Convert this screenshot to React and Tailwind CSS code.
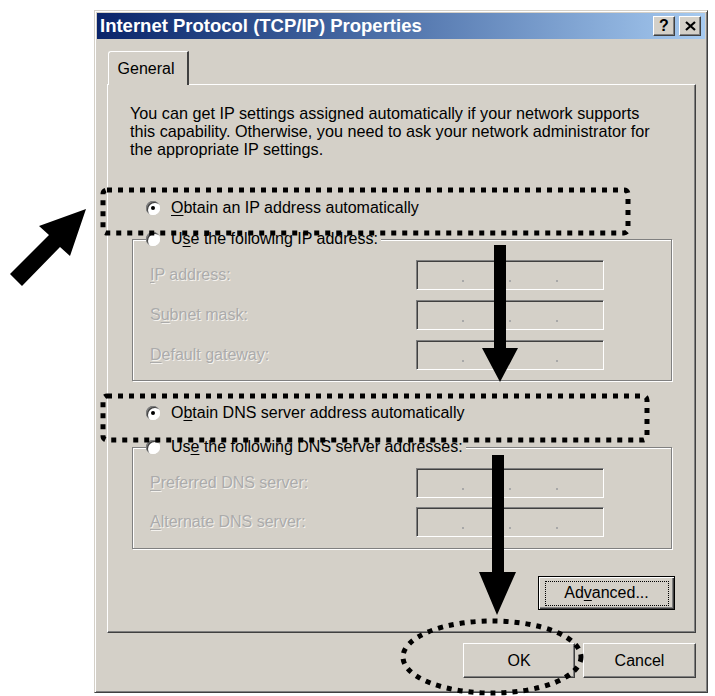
const Radio = ({ checked }) => (
  <span className="relative block h-[14px] w-[14px] shrink-0 rounded-full bg-white shadow-[inset_1px_1px_0_#808080,inset_2px_2px_0_#404040,inset_-1px_-1px_0_#fff]">
    {checked && <span className="absolute left-[5px] top-[5px] block h-[4px] w-[4px] rounded-full bg-black" />}
  </span>
);

const IpBox = () => (
  <div className="flex h-[30px] w-[188px] items-end justify-evenly pb-[7px] border border-t-[#808080] border-l-[#808080] border-b-white border-r-white shadow-[inset_1px_1px_0_#404040]">
    {[0, 1, 2].map((i) => (
      <span key={i} className="block h-[2px] w-[2px] bg-[#a8a8a8]" />
    ))}
  </div>
);

const FieldRow = ({ pre = '', k, rest }) => (
  <div className="flex items-center">
    <span className="w-[266px] text-[#ababab] [text-shadow:1px_1px_0_#f4f2ee]">
      {pre}
      <u className="underline-offset-2">{k}</u>
      {rest}
    </span>
    <IpBox />
  </div>
);

const Button = ({ children, focused, className = '' }) => (
  <button
    className={`flex h-[35px] items-center justify-center bg-[#d4d0c8] text-black ${
      focused
        ? 'border border-black shadow-[inset_1px_1px_0_#fff,inset_-1px_-1px_0_#404040,inset_-2px_-2px_0_#808080]'
        : 'border border-t-white border-l-white border-b-[#404040] border-r-[#404040] shadow-[inset_-1px_-1px_0_#808080]'
    } ${className}`}
  >
    {focused ? (
      <span className="flex h-[25px] w-[124px] items-center justify-center border border-dotted border-black">{children}</span>
    ) : (
      children
    )}
  </button>
);

const Overlay = () => (
  <svg className="pointer-events-none absolute left-0 top-0" width="715" height="696" viewBox="0 0 715 696">
    <g fill="none" stroke="#000" strokeWidth="5" strokeDasharray="5 6">
      <rect x="103" y="190" width="525" height="43" rx="4" />
      <rect x="103" y="396" width="544" height="44" rx="4" />
      <ellipse cx="492" cy="657" rx="89" ry="36" />
    </g>
    <polygon fill="#000" points="86,209 70,256 60,247 22,286 10,274 49,235 39,226" />
    <polygon fill="#000" points="494,245 506,245 506,348 518,348 500,382 482,348 494,348" />
    <polygon fill="#000" points="492,455 504,455 504,572 516,572 497,615 479,572 492,572" />
  </svg>
);

export default function App() {
  return (
    <div className="relative h-[696px] w-[715px] overflow-hidden bg-white font-['Liberation_Sans',Arial,sans-serif] text-[16px] leading-[18px] text-black">
      <div className="ml-[94px] mt-[10px] flex h-[683px] w-[614px] flex-col border border-t-[#d4d0c8] border-l-[#d4d0c8] border-b-[#404040] border-r-[#404040] bg-[#d4d0c8] p-[2px] shadow-[inset_1px_1px_0_#fff,inset_-1px_-1px_0_#808080]">
        {/* title bar */}
        <div className="flex h-[26px] items-center justify-between bg-gradient-to-r from-[#0a246a] to-[#a6caf0] pl-[3px] pr-[4px]">
          <span className="text-[18.5px] font-bold text-white">Internet Protocol (TCP/IP) Properties</span>
          <div className="flex gap-[4px]">
            <span className="flex h-[20px] w-[22px] items-center justify-center border border-t-white border-l-white border-b-[#404040] border-r-[#404040] bg-[#d4d0c8] text-[16px] font-bold leading-none shadow-[inset_-1px_-1px_0_#808080]">?</span>
            <span className="flex h-[20px] w-[22px] items-center justify-center border border-t-white border-l-white border-b-[#404040] border-r-[#404040] bg-[#d4d0c8] shadow-[inset_-1px_-1px_0_#808080]">
              <svg width="11" height="10" viewBox="0 0 11 10">
                <path d="M1 1 L10 9 M10 1 L1 9" stroke="#000" strokeWidth="2.2" />
              </svg>
            </span>
          </div>
        </div>

        {/* tab */}
        <div className="ml-[11px] mt-[12px] flex">
          <div className="relative z-10 -mb-[1px] flex h-[34px] w-[81px] items-center justify-center rounded-tl-[3px] border-l border-t border-r-2 border-l-white border-t-white border-r-[#404040] bg-[#d4d0c8] pr-[4px]">
            General
          </div>
        </div>

        {/* panel */}
        <div className="ml-[10px] flex h-[549px] w-[589px] flex-col border border-t-white border-l-white border-b-[#404040] border-r-[#404040] pl-[22px] pr-[20px] pt-[19px] shadow-[inset_-1px_-1px_0_#808080]">
          <p className="whitespace-nowrap text-[16.2px]">
            You can get IP settings assigned automatically if your network supports
            <br />
            this capability. Otherwise, you need to ask your network administrator for
            <br />
            the appropriate IP settings.
          </p>

          <label className="ml-[16px] mt-[40px] flex h-[20px] items-center gap-[11px]">
            <Radio checked />
            <span>
              <u className="underline-offset-2">O</u>btain an IP address automatically
            </span>
          </label>

          <div className="ml-[2px] mt-[21px] flex h-[142px] w-[540px] flex-col border border-[#808080] shadow-[inset_1px_1px_0_#fff,1px_1px_0_#fff]">
            <label className="-mt-[11px] ml-[13px] flex h-[20px] w-fit items-center gap-[11px] bg-[#d4d0c8] pr-[3px]">
              <Radio />
              <span>
                U<u className="underline-offset-2">s</u>e the following IP address:
              </span>
            </label>
            <div className="ml-[17px] mt-[11px] flex flex-col gap-[10px]">
              <FieldRow k="I" rest="P address:" />
              <FieldRow pre="S" k="u" rest="bnet mask:" />
              <FieldRow k="D" rest="efault gateway:" />
            </div>
          </div>

          <label className="ml-[16px] mt-[22px] flex h-[20px] items-center gap-[11px]">
            <Radio checked />
            <span>
              O<u className="underline-offset-2">b</u>tain DNS server address automatically
            </span>
          </label>

          <div className="ml-[2px] mt-[24px] flex h-[102px] w-[540px] flex-col border border-[#808080] shadow-[inset_1px_1px_0_#fff,1px_1px_0_#fff]">
            <label className="-mt-[11px] ml-[13px] flex h-[20px] w-fit items-center gap-[11px] bg-[#d4d0c8] pr-[3px]">
              <Radio />
              <span>
                Us<u className="underline-offset-2">e</u> the following DNS server addresses:
              </span>
            </label>
            <div className="ml-[17px] mt-[11px] flex flex-col gap-[9px]">
              <FieldRow k="P" rest="referred DNS server:" />
              <FieldRow k="A" rest="lternate DNS server:" />
            </div>
          </div>

          <div className="mt-[27px] flex justify-end">
            <Button focused className="w-[137px] !h-[34px]">
              <span>
                Ad<u className="underline-offset-2">v</u>anced...
              </span>
            </Button>
          </div>
        </div>

        {/* bottom buttons */}
        <div className="mt-[10px] flex justify-end gap-[8px] pr-[9px]">
          <Button className="w-[112px]">OK</Button>
          <Button className="w-[113px]">Cancel</Button>
        </div>
      </div>
      <Overlay />
    </div>
  );
}
